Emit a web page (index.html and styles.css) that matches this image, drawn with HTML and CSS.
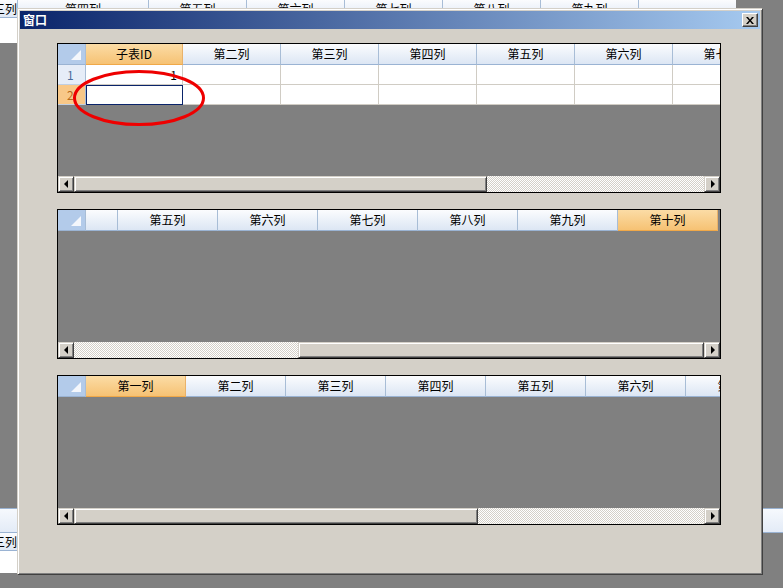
FILE: index.html
```html
<!DOCTYPE html>
<html>
<head>
  <title>窗口</title>
  <link rel="stylesheet" href="styles.css">
</head>
<body>
  <!-- parent window behind the dialog -->
  <div class="parent-top">
    <div class="ph">
      <div class="pc pc-first">三列</div>
      <div class="pc pc-wide">第四列</div>
      <div class="pc">第五列</div>
      <div class="pc">第六列</div>
      <div class="pc">第七列</div>
      <div class="pc">第八列</div>
      <div class="pc">第九列</div>
    </div>
  </div>
  <div class="parent-bottom">
    <div class="pb-band"></div>
    <div class="pb-left">
      <div class="pb-head">三列</div>
      <div class="pb-row"></div>
    </div>
  </div>

  <div class="dialog">
    <div class="titlebar">
      <span class="title">窗口</span>
      <div class="close">
        <svg width="8" height="7" viewBox="0 0 8 7"><path d="M0 0h2l2 2.5L6 0h2L5 3.5 8 7H6L4 4.5 2 7H0l3-3.5z" fill="#000"/></svg>
      </div>
    </div>

    <div class="client">
      <!-- grid 1 -->
      <div class="grid grid-main">
        <div class="hrow">
          <div class="corner"><svg width="10" height="10"><polygon points="10,0 10,10 0,10" fill="#fff" opacity="0.85"/></svg></div>
          <div class="hc sel first">子表ID</div>
          <div class="hc">第二列</div>
          <div class="hc">第三列</div>
          <div class="hc">第四列</div>
          <div class="hc">第五列</div>
          <div class="hc">第六列</div>
          <div class="hc">第七列</div>
        </div>
        <div class="drow">
          <div class="rh">1</div>
          <div class="dc first num">1</div>
          <div class="dc"></div><div class="dc"></div><div class="dc"></div><div class="dc"></div><div class="dc"></div><div class="dc"></div>
        </div>
        <div class="drow">
          <div class="rh cur">2</div>
          <div class="dc first edit"></div>
          <div class="dc"></div><div class="dc"></div><div class="dc"></div><div class="dc"></div><div class="dc"></div><div class="dc"></div>
        </div>
        <div class="hscroll">
          <div class="sb-btn"><i class="arr-l"></i></div>
          <div class="thumb" style="width: 413px;"></div>
          <div class="track"></div>
          <div class="sb-btn"><i class="arr-r"></i></div>
        </div>
        <svg class="mark" width="135" height="58" viewBox="0 0 135 58"><ellipse cx="67" cy="29" rx="64.5" ry="26.5" fill="none" stroke="#ee0000" stroke-width="3"/></svg>
      </div>

      <!-- grid 2 -->
      <div class="grid">
        <div class="hrow">
          <div class="corner"><svg width="10" height="10"><polygon points="10,0 10,10 0,10" fill="#fff" opacity="0.85"/></svg></div>
          <div class="hc part"></div>
          <div class="hc w100">第五列</div>
          <div class="hc w100">第六列</div>
          <div class="hc w100">第七列</div>
          <div class="hc w100">第八列</div>
          <div class="hc w100">第九列</div>
          <div class="hc w100 sel">第十列</div>
        </div>
        <div class="hscroll">
          <div class="sb-btn"><i class="arr-l"></i></div>
          <div class="track" style="width: 224px; flex: none;"></div>
          <div class="thumb" style="flex: 1;"></div>
          <div class="sb-btn"><i class="arr-r"></i></div>
        </div>
      </div>

      <!-- grid 3 -->
      <div class="grid">
        <div class="hrow">
          <div class="corner"><svg width="10" height="10"><polygon points="10,0 10,10 0,10" fill="#fff" opacity="0.85"/></svg></div>
          <div class="hc w100 sel">第一列</div>
          <div class="hc w100">第二列</div>
          <div class="hc w100">第三列</div>
          <div class="hc w100">第四列</div>
          <div class="hc w100">第五列</div>
          <div class="hc w100">第六列</div>
          <div class="hc w100">第七列</div>
        </div>
        <div class="hscroll">
          <div class="sb-btn"><i class="arr-l"></i></div>
          <div class="thumb" style="width: 404px;"></div>
          <div class="track"></div>
          <div class="sb-btn"><i class="arr-r"></i></div>
        </div>
      </div>
    </div>
  </div>
</body>
</html>
```

FILE: styles.css
```css
* {
  box-sizing: border-box;
}

body {
  margin: 0;
  width: 783px;
  height: 588px;
  overflow: hidden;
  position: relative;
  background-color: #808080;
  font-family: "Noto Sans CJK SC", "Liberation Sans", sans-serif;
  font-size: 12px;
  color: #000;
}

/* parent window */
.parent-top {
  position: absolute;
  left: 0;
  top: 0;
  width: 736px;
  height: 43px;
  background-color: #fff;
}

.ph {
  display: flex;
  height: 18px;
  background: linear-gradient(#fbfcfe, #dfe8f5);
  border-bottom: 1px solid #9ab3d3;
  overflow: hidden;
}

.pc {
  flex: 0 0 98px;
  border-right: 1px solid #a8bdd6;
  text-align: center;
  line-height: 17px;
  white-space: nowrap;
}

.pc-first {
  flex-basis: 18px;
  text-align: right;
  direction: rtl;
  overflow: hidden;
}

.pc-wide {
  flex-basis: 131px;
}

.parent-bottom {
  position: absolute;
  left: 0;
  top: 508px;
  width: 783px;
}

.pb-band {
  height: 25px;
  background: linear-gradient(#f6f9fd, #e3ebf7);
  border-top: 1px solid #9ab3d3;
  border-bottom: 1px solid #9ab3d3;
}

.pb-left {
  width: 18px;
  background-color: #fff;
  border-right: 1px solid #a8bdd6;
}

.pb-head {
  height: 18px;
  line-height: 17px;
  direction: rtl;
  overflow: hidden;
  white-space: nowrap;
  background: linear-gradient(#fbfcfe, #dfe8f5);
  border-bottom: 1px solid #9ab3d3;
}

.pb-row {
  height: 22px;
}

/* dialog window */
.dialog {
  position: absolute;
  left: 17px;
  top: 8px;
  width: 746px;
  height: 567px;
  padding: 2px;
  background-color: #d4d0c8;
  border: 1px solid;
  border-color: #d4d0c8 #404040 #404040 #d4d0c8;
  box-shadow: inset 1px 1px #fff, inset -1px -1px #808080;
  display: flex;
  flex-direction: column;
}

.titlebar {
  height: 18px;
  flex-shrink: 0;
  display: flex;
  align-items: center;
  justify-content: space-between;
  background: linear-gradient(to right, #0a246a, #a6caf0);
  padding-left: 3px;
}

.title {
  color: #fff;
  font-weight: bold;
  font-size: 12px;
  line-height: 18px;
}

.close {
  width: 16px;
  height: 14px;
  margin-right: 2px;
  background-color: #d4d0c8;
  border: 1px solid;
  border-color: #fff #404040 #404040 #fff;
  box-shadow: inset -1px -1px #808080;
  display: flex;
  align-items: center;
  justify-content: center;
}

.client {
  padding: 14px 0 0 37px;
}

/* grids */
.grid {
  position: relative;
  width: 664px;
  height: 150px;
  border: 1px solid #000;
  background-color: #808080;
  display: flex;
  flex-direction: column;
  overflow: hidden;
}

.grid + .grid {
  margin-top: 16px;
}

.hrow,
.drow {
  display: flex;
  flex-shrink: 0;
}

.hrow {
  height: 21px;
}

.drow {
  height: 20px;
}

.corner {
  flex: 0 0 28px;
  background-color: #b3cbea;
  border-right: 1px solid #a8bdd6;
  border-bottom: 1px solid #9ab3d3;
  display: flex;
  align-items: flex-end;
  justify-content: flex-end;
  padding: 0 4px 4px 0;
}

.hc {
  flex: 0 0 98px;
  background: linear-gradient(#fbfcfe, #dce6f4);
  border-right: 1px solid #a8bdd6;
  border-bottom: 1px solid #9ab3d3;
  text-align: center;
  line-height: 20px;
  white-space: nowrap;
}

.hc.first,
.dc.first {
  flex-basis: 97px;
}

.hc.w100 {
  flex-basis: 100px;
}

.hc.part {
  flex-basis: 32px;
}

.hc.sel {
  background: linear-gradient(#fbdca6, #f6c274);
  border-right-color: #e9b26a;
  border-bottom-color: #f0a848;
}

.rh {
  flex: 0 0 28px;
  background-color: #e6edf8;
  border-right: 1px solid #a8bdd6;
  border-bottom: 1px solid #c0cfe3;
  color: #4a6d9c;
  padding-left: 9px;
  line-height: 19px;
}

.rh.cur {
  background-color: #f8c888;
  color: #b66a1c;
}

.dc {
  flex: 0 0 98px;
  background-color: #fff;
  border-right: 1px solid #d0ccc4;
  border-bottom: 1px solid #d0ccc4;
}

.dc.num {
  text-align: right;
  padding-right: 5px;
  line-height: 19px;
}

.dc.edit {
  border: 1px solid #0a246a;
}

.mark {
  position: absolute;
  left: 14px;
  top: 25px;
}

/* classic scrollbar */
.hscroll {
  margin-top: auto;
  height: 16px;
  flex-shrink: 0;
  display: flex;
}

.sb-btn,
.thumb {
  background-color: #d4d0c8;
  border: 1px solid;
  border-color: #d4d0c8 #404040 #404040 #d4d0c8;
  box-shadow: inset 1px 1px #fff, inset -1px -1px #808080;
}

.sb-btn {
  flex: 0 0 16px;
  display: flex;
  align-items: center;
  justify-content: center;
}

.thumb {
  flex-shrink: 0;
}

.track {
  flex: 1;
  background: repeating-conic-gradient(#fff 0 25%, #d4d0c8 0 50%) 0 0 / 2px 2px;
}

.arr-l,
.arr-r {
  width: 0;
  height: 0;
  border-top: 4px solid transparent;
  border-bottom: 4px solid transparent;
}

.arr-l {
  border-right: 4px solid #000;
  margin-right: 1px;
}

.arr-r {
  border-left: 4px solid #000;
  margin-left: 1px;
}
```
